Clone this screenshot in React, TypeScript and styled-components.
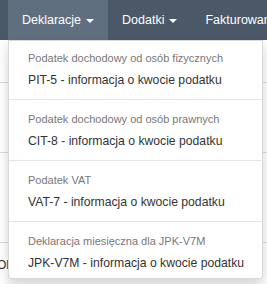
import React from "react";
import styled, { createGlobalStyle } from "styled-components";

const GlobalStyle = createGlobalStyle`
  html, body { margin: 0; padding: 0; background: #fff; }
  body { font-family: "Liberation Sans", Arial, sans-serif; overflow: hidden; }
`;

const Page = styled.div`
  position: relative;
  width: 267px;
  height: 284px;
  overflow: hidden;
  background: #fff;
`;

const Navbar = styled.nav`
  position: relative;
  z-index: 2;
  display: flex;
  height: 40px;
  padding-left: 8px;
  background: #4b5867;
  white-space: nowrap;
`;

const NavItem = styled.div<{ $active?: boolean }>`
  position: relative;
  display: flex;
  align-items: center;
  padding: 0 14px;
  background: ${(p) => (p.$active ? "#606f80" : "transparent")};
  color: #fff;
  font-size: 12.5px;
`;

const Caret = styled.span`
  display: inline-block;
  margin-left: 5px;
  margin-top: 2px;
  border-top: 4px solid #fff;
  border-left: 4px solid transparent;
  border-right: 4px solid transparent;
`;

const Menu = styled.div`
  position: absolute;
  top: 100%;
  left: 0;
  z-index: 10;
  width: 255px;
  box-sizing: border-box;
  padding: 6px 0 4px;
  background: #fff;
  border: 1px solid rgba(0, 0, 0, 0.15);
  border-radius: 0 0 4px 4px;
  box-shadow: 0 6px 12px rgba(0, 0, 0, 0.175);
`;

const Header = styled.div`
  padding: 3px 19px 2px;
  font-size: 11px;
  line-height: 16px;
  color: #777;
  white-space: nowrap;
`;

const Item = styled.a`
  display: block;
  padding: 3px 19px 2px;
  font-size: 12.2px;
  line-height: 18px;
  color: #333;
  text-decoration: none;
  white-space: nowrap;
`;

const Divider = styled.div`
  height: 1px;
  margin: 8px 0;
  background: #e5e5e5;
`;

const Content = styled.div`
  display: flex;
  flex-direction: column;
`;

const Row = styled.div<{ $h: number }>`
  height: ${(p) => p.$h}px;
  border-bottom: 1px solid #ddd;
`;

const TextRow = styled.div`
  padding-top: 14px;
  font-size: 12px;
  line-height: 16px;
  color: #333;
  margin-left: -3px;
`;

const groups = [
  { header: "Podatek dochodowy od osób fizycznych", item: "PIT-5 - informacja o kwocie podatku" },
  { header: "Podatek dochodowy od osób prawnych", item: "CIT-8 - informacja o kwocie podatku" },
  { header: "Podatek VAT", item: "VAT-7 - informacja o kwocie podatku" },
  { header: "Deklaracja miesięczna dla JPK-V7M", item: "JPK-V7M - informacja o kwocie podatku" },
];

export default function App() {
  return (
    <Page>
      <GlobalStyle />
      <Navbar>
        <NavItem $active>
          Deklaracje
          <Caret />
          <Menu>
            {groups.map((g, i) => (
              <React.Fragment key={g.item}>
                {i > 0 && <Divider />}
                <Header>{g.header}</Header>
                <Item href="#">{g.item}</Item>
              </React.Fragment>
            ))}
          </Menu>
        </NavItem>
        <NavItem>
          Dodatki
          <Caret />
        </NavItem>
        <NavItem>Fakturowanie</NavItem>
      </Navbar>
      <Content>
        <Row $h={42} />
        <Row $h={69} />
        <Row $h={89} />
        <TextRow>OD</TextRow>
      </Content>
    </Page>
  );
}
